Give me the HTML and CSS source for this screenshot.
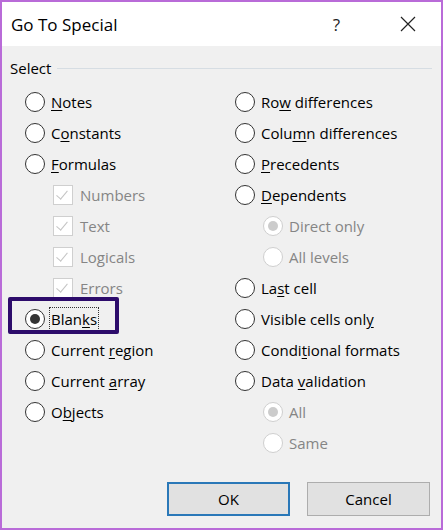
FILE: index.html
```html
<!DOCTYPE html>
<html lang="en">

<head>
  <meta charset="UTF-8">
  <title>Go To Special</title>
  <link rel="stylesheet" href="styles.css">
</head>

<body>

  <div class="dialog">
    <div class="titlebar">
      <span class="title">Go To Special</span>
      <span class="help">?</span>
      <svg class="close" width="16" height="16" viewBox="0 0 16 16">
        <path d="M1 1 L15 15 M15 1 L1 15" stroke="#222" stroke-width="1.2" fill="none" />
      </svg>
    </div>

    <div class="content">
      <div class="group-head">
        <span>Select</span>
        <span class="rule"></span>
      </div>

      <div class="options">
        <div class="col">
          <div class="opt"><span class="radio"></span><span><u>N</u>otes</span></div>
          <div class="opt"><span class="radio"></span><span>C<u>o</u>nstants</span></div>
          <div class="opt"><span class="radio"></span><span><u>F</u>ormulas</span></div>
          <div class="opt sub disabled"><span class="check"></span><span>Numbers</span></div>
          <div class="opt sub disabled"><span class="check"></span><span>Text</span></div>
          <div class="opt sub disabled"><span class="check"></span><span>Logicals</span></div>
          <div class="opt sub disabled"><span class="check"></span><span>Errors</span></div>
          <div class="opt marked"><span class="radio on"></span><span class="focus">Blan<u>k</u>s</span></div>
          <div class="opt"><span class="radio"></span><span>Current <u>r</u>egion</span></div>
          <div class="opt"><span class="radio"></span><span>Current <u>a</u>rray</span></div>
          <div class="opt"><span class="radio"></span><span>O<u>b</u>jects</span></div>
        </div>
        <div class="col">
          <div class="opt"><span class="radio"></span><span>Ro<u>w</u> differences</span></div>
          <div class="opt"><span class="radio"></span><span>Colu<u>m</u>n differences</span></div>
          <div class="opt"><span class="radio"></span><span><u>P</u>recedents</span></div>
          <div class="opt"><span class="radio"></span><span><u>D</u>ependents</span></div>
          <div class="opt sub disabled"><span class="radio on"></span><span>Direct only</span></div>
          <div class="opt sub disabled"><span class="radio"></span><span>All levels</span></div>
          <div class="opt"><span class="radio"></span><span>La<u>s</u>t cell</span></div>
          <div class="opt"><span class="radio"></span><span>Visible cells onl<u>y</u></span></div>
          <div class="opt"><span class="radio"></span><span>Condi<u>t</u>ional formats</span></div>
          <div class="opt"><span class="radio"></span><span>Data <u>v</u>alidation</span></div>
          <div class="opt sub disabled"><span class="radio on"></span><span>All</span></div>
          <div class="opt sub disabled"><span class="radio"></span><span>Same</span></div>
        </div>
      </div>

      <div class="buttons">
        <button class="default">OK</button>
        <button>Cancel</button>
      </div>
    </div>
  </div>

</body>

</html>
```

FILE: styles.css
```css
body {
  margin: 0;
  font-family: "Open Sans", "Noto Sans", sans-serif;
  color: #000;
}

.dialog {
  width: 443px;
  height: 530px;
  box-sizing: border-box;
  border: 2px solid #b96bd8;
  background-color: #f0f0f0;
}

.titlebar {
  height: 44px;
  background-color: #fff;
  display: flex;
  align-items: center;
  padding-left: 9px;
}

.title {
  font-size: 17px;
  flex: 1;
}

.help {
  font-size: 17px;
  color: #222;
  margin-right: 60px;
}

.close {
  margin-right: 25px;
}

.content {
  padding: 0 9px 0 8px;
}

.group-head {
  display: flex;
  align-items: center;
  height: 26px;
  padding-top: 9px;
  font-size: 15px;
}

.group-head .rule {
  flex: 1;
  height: 1px;
  background-color: #d6dde3;
  margin-left: 6px;
}

.options {
  display: flex;
  margin-top: 5px;
  padding-left: 15px;
  font-size: 15px;
}

.col {
  width: 210px;
  flex: none;
}

.opt {
  height: 31px;
  display: flex;
  align-items: center;
  white-space: nowrap;
  position: relative;
}

.opt u {
  text-underline-offset: 2px;
}

.opt.sub {
  padding-left: 28px;
}

.disabled {
  color: #858585;
}

.radio {
  width: 18px;
  height: 18px;
  border: 1px solid #333;
  border-radius: 50%;
  background-color: #fff;
  margin-right: 6px;
  flex: none;
  display: flex;
  align-items: center;
  justify-content: center;
}

.radio.on::after {
  content: "";
  width: 10px;
  height: 10px;
  border-radius: 50%;
  background-color: #333;
}

.disabled .radio {
  border-color: #cfcfcf;
}

.disabled .radio.on::after {
  background-color: #cccccc;
}

.check {
  width: 18px;
  height: 18px;
  border: 1px solid #cfcfcf;
  background-color: #fff;
  margin-right: 7px;
  flex: none;
  position: relative;
}

.check::after {
  content: "";
  position: absolute;
  left: 5px;
  top: 2px;
  width: 5px;
  height: 10px;
  border: solid #c4c4c4;
  border-width: 0 1.5px 1.5px 0;
  transform: rotate(40deg);
}

.focus {
  outline: 1px dotted #333;
  outline-offset: 1px;
  line-height: 20px;
}

.marked::before {
  content: "";
  position: absolute;
  left: -17px;
  top: -6px;
  width: 103px;
  height: 29px;
  border: 4px solid #2d0c6b;
  border-radius: 2px;
}

.buttons {
  display: flex;
  justify-content: flex-end;
  gap: 17px;
  margin-top: 24px;
  padding-right: 2px;
}

.buttons button {
  width: 123px;
  height: 34px;
  font-family: "Open Sans", "Noto Sans", sans-serif;
  font-size: 15px;
  background-color: #e1e1e1;
  border: 1px solid #adadad;
  color: #000;
}

.buttons button.default {
  border: 2px solid #2a78b8;
}
```
